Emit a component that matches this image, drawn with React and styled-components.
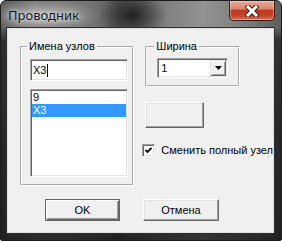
import React from "react";
import styled, { createGlobalStyle } from "styled-components";

const GlobalStyle = createGlobalStyle`
  html, body {
    margin: 0;
    padding: 0;
    background: #ffffff;
  }
  body {
    font-family: "Liberation Sans", Arial, sans-serif;
    font-size: 11px;
    color: #000;
  }
`;

const Window = styled.div`
  width: 282px;
  height: 241px;
  box-sizing: border-box;
  display: flex;
  flex-direction: column;
  padding: 0 7px 7px 6px;
  border-radius: 6px 6px 2px 2px;
  border: 1px solid #1c1c1c;
  background:
    radial-gradient(ellipse 34px 26px at 47% 14px, rgba(20, 20, 20, 0.85), rgba(20, 20, 20, 0) 100%),
    radial-gradient(ellipse 60px 16px at 40px 15px, rgba(220, 220, 220, 0.55), rgba(220, 220, 220, 0) 100%),
    linear-gradient(180deg, rgba(0, 0, 0, 0) 0, rgba(0, 0, 0, 0) 27px, rgba(0, 0, 0, 0.5) 40px, rgba(0, 0, 0, 0.65) 100%),
    linear-gradient(90deg, #5a5a5a 0%, #7e7e7e 12%, #777 30%, #5e5e5e 42%, #7a7a7a 55%, #939393 72%, #7a7a7a 88%, #5e5e5e 100%);
  overflow: hidden;
`;

const TitleBar = styled.div`
  height: 27px;
  display: flex;
  align-items: flex-start;
  flex-shrink: 0;
`;

const Title = styled.div`
  font-family: "Noto Sans", "Open Sans", sans-serif;
  font-size: 13px;
  line-height: 16px;
  margin: 6px 0 0 1px;
  color: #101828;
  text-shadow: 0 0 5px rgba(255, 255, 255, 0.9), 0 0 9px rgba(255, 255, 255, 0.7);
`;

const CloseButton = styled.div`
  margin-left: auto;
  margin-right: -1px;
  width: 46px;
  height: 20px;
  box-sizing: border-box;
  border: 1px solid #3a1610;
  border-top: none;
  border-radius: 0 0 5px 5px;
  background: linear-gradient(180deg, #e9a896 0%, #d98470 42%, #c0391f 50%, #c3452a 78%, #dc7156 100%);
  box-shadow: inset 0 0 0 1px rgba(255, 255, 255, 0.35);
  display: flex;
  align-items: center;
  justify-content: center;
`;

const Client = styled.div`
  flex: 1;
  background: #f0f0f0;
  border: 1px solid #dedede;
  box-shadow: 0 0 0 1px #2e2e2e;
  padding: 11px 0 0 12px;
  overflow: hidden;
  display: flex;
  flex-direction: column;
`;

const TopRow = styled.div`
  display: flex;
  align-items: flex-start;
  gap: 11px;
`;

const Column = styled.div`
  display: flex;
  flex-direction: column;
  align-items: flex-start;
`;

const GroupBox = styled.fieldset`
  margin: 0;
  min-width: 0;
  box-sizing: border-box;
  width: ${(p) => p.$width}px;
  border: 2px groove #ffffff;
  padding: ${(p) => p.$pad};
  display: flex;
  flex-direction: column;
  gap: 8px;
`;

const Legend = styled.legend`
  margin-left: -3px;
  padding: 0 2px;
  line-height: 13px;
`;

const Sunken = styled.div`
  box-sizing: border-box;
  width: ${(p) => p.$width}px;
  height: ${(p) => p.$height}px;
  background: #ffffff;
  border: 1px solid;
  border-color: #a0a0a0 #ffffff #ffffff #a0a0a0;
  box-shadow: inset 1px 1px #696969, inset -1px -1px #e3e3e3;
  padding: 1px;
`;

const TextField = styled(Sunken)`
  display: flex;
  align-items: center;
  padding-left: 2px;
  line-height: 13px;
`;

const Caret = styled.span`
  display: inline-block;
  width: 1px;
  height: 13px;
  background: #000;
  margin-left: 1px;
`;

const ListItem = styled.div`
  height: 13px;
  line-height: 13px;
  padding-left: 1px;
  background: ${(p) => (p.$selected ? "#3399ff" : "transparent")};
  color: ${(p) => (p.$selected ? "#ffffff" : "#000")};
`;

const Combo = styled(Sunken)`
  display: flex;
  align-items: center;
  justify-content: space-between;
  padding: 1px 1px 1px 3px;
`;

const DropButton = styled.div`
  width: 16px;
  height: 16px;
  box-sizing: border-box;
  background: #f0f0f0;
  border: 1px solid;
  border-color: #e3e3e3 #696969 #696969 #e3e3e3;
  box-shadow: inset 1px 1px #fff, inset -1px -1px #a0a0a0;
  display: flex;
  align-items: center;
  justify-content: center;
`;

const Button = styled.div`
  box-sizing: border-box;
  width: ${(p) => p.$width}px;
  height: ${(p) => p.$height}px;
  margin-top: ${(p) => p.$top || 0}px;
  background: #f0f0f0;
  display: flex;
  align-items: center;
  justify-content: center;
  border: 1px solid;
  border-color: ${(p) => (p.$default ? "#646464" : "#ffffff #696969 #696969 #ffffff")};
  box-shadow: ${(p) =>
    p.$default
      ? "inset 1px 1px #fff, inset -1px -1px #696969, inset -2px -2px #a0a0a0"
      : "inset -1px -1px #a0a0a0, inset 1px 1px #e3e3e3"};
`;

const CheckRow = styled.label`
  display: flex;
  align-items: center;
  gap: 6px;
  margin: 16px 0 0 -3px;
  white-space: nowrap;
  line-height: 13px;
`;

const CheckBox = styled(Sunken)`
  flex-shrink: 0;
  display: flex;
  align-items: center;
  justify-content: center;
  padding: 0;
`;

const ButtonRow = styled.div`
  display: flex;
  gap: 23px;
  margin: 13px 0 0 25px;
`;

function CloseGlyph() {
  return (
    <svg width="14" height="12" viewBox="0 0 14 12">
      <path d="M3 2 L11 10 M11 2 L3 10" stroke="#3d1a14" strokeWidth="5" strokeLinecap="square" />
      <path d="M3 2 L11 10 M11 2 L3 10" stroke="#ffffff" strokeWidth="3" strokeLinecap="square" />
    </svg>
  );
}

function App() {
  return (
    <>
      <GlobalStyle />
      <Window>
        <TitleBar>
          <Title>Проводник</Title>
          <CloseButton>
            <CloseGlyph />
          </CloseButton>
        </TitleBar>
        <Client>
          <TopRow>
            <GroupBox $width={118} $pad="6px 8px 7px 8px">
              <Legend>Имена узлов</Legend>
              <TextField $width={98} $height={22}>
                X3
                <Caret />
              </TextField>
              <Sunken $width={98} $height={88}>
                <ListItem>9</ListItem>
                <ListItem $selected>X3</ListItem>
              </Sunken>
            </GroupBox>
            <Column>
              <GroupBox $width={95} $pad="5px 10px 7px 10px">
                <Legend>Ширина</Legend>
                <Combo $width={71} $height={20}>
                  1
                  <DropButton>
                    <svg width="7" height="4" viewBox="0 0 7 4">
                      <path d="M0 0 H7 L3.5 4 Z" fill="#000" />
                    </svg>
                  </DropButton>
                </Combo>
              </GroupBox>
              <Button $width={59} $height={26} $top={15} />
              <CheckRow>
                <CheckBox $width={13} $height={13}>
                  <svg width="7" height="7" viewBox="0 0 7 7">
                    <path d="M0.5 3 L2.5 5 L6.5 1" stroke="#000" strokeWidth="1.8" fill="none" />
                  </svg>
                </CheckBox>
                Сменить полный узел
              </CheckRow>
            </Column>
          </TopRow>
          <ButtonRow>
            <Button $width={75} $height={22} $default>
              OK
            </Button>
            <Button $width={76} $height={22}>
              Отмена
            </Button>
          </ButtonRow>
        </Client>
      </Window>
    </>
  );
}

export default App;
